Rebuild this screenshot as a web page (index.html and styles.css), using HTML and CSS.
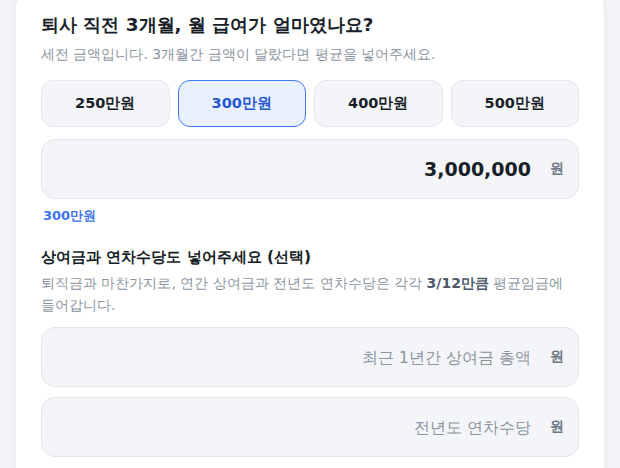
FILE: index.html
```html
<!DOCTYPE html>
<html lang="ko">
<head>
<meta charset="utf-8">
<title>평균임금 입력</title>
<link rel="stylesheet" href="styles.css">
</head>
<body>
<div class="page">
  <section class="card">
    <h2 class="title">퇴사 직전 3개월, 월 급여가 얼마였나요?</h2>
    <p class="subtitle">세전 금액입니다. 3개월간 금액이 달랐다면 평균을 넣어주세요.</p>
    <div class="chips">
      <button class="chip" type="button">250만원</button>
      <button class="chip chip-active" type="button">300만원</button>
      <button class="chip" type="button">400만원</button>
      <button class="chip" type="button">500만원</button>
    </div>
    <label class="field field-main">
      <input class="field-input field-value" type="text" value="3,000,000">
      <span class="field-unit">원</span>
    </label>
    <p class="helper">300만원</p>

    <h3 class="section-title">상여금과 연차수당도 넣어주세요 (선택)</h3>
    <p class="desc">퇴직금과 마찬가지로, 연간 상여금과 전년도 연차수당은 각각 <strong>3/12만큼</strong> 평균임금에 들어갑니다.</p>
    <label class="field field-opt">
      <input class="field-input" type="text" placeholder="최근 1년간 상여금 총액">
      <span class="field-unit">원</span>
    </label>
    <label class="field field-opt">
      <input class="field-input" type="text" placeholder="전년도 연차수당">
      <span class="field-unit">원</span>
    </label>
  </section>
</div>
</body>
</html>
```

FILE: styles.css
```css
* { box-sizing: border-box; }

html, body {
  margin: 0;
  padding: 0;
  height: 100%;
  overflow: hidden;
  background: #f2f4f7;
  font-family: "DejaVu Sans", sans-serif;
  color: #191f28;
}

.page {
  padding: 0 16px;
}

.card {
  margin-top: -12px;
  background: #ffffff;
  border-radius: 20px;
  padding: 24px 25px 40px;
  box-shadow: 0 1px 6px rgba(30, 40, 70, 0.07);
  min-height: 520px;
}

.title {
  margin: 0;
  font-size: 18.4px;
  line-height: 26px;
  font-weight: 700;
  color: #191f28;
}

.subtitle {
  margin: 6px 0 0;
  font-size: 14px;
  line-height: 20px;
  color: #8b95a1;
}

.chips {
  margin-top: 16px;
  display: grid;
  grid-template-columns: repeat(4, 1fr);
  gap: 8px;
}

.chip {
  height: 47px;
  border: 1px solid #e3e6eb;
  background: #f4f5f8;
  border-radius: 12px;
  font-family: inherit;
  font-size: 14.5px;
  font-weight: 700;
  color: #191f28;
  padding: 0;
}

.chip-active {
  background: #eaf1fe;
  border-color: #3e78f2;
  color: #2557d0;
}

.field {
  display: flex;
  align-items: center;
  gap: 19px;
  height: 60px;
  padding: 0 14px 0 16px;
  background: #f4f5f8;
  border: 1px solid #e3e6eb;
  border-radius: 14px;
}

.field-main {
  margin-top: 12px;
}

.field-opt {
  margin-top: 10px;
}

.desc + .field-opt {
  margin-top: 11px;
}

.field-input {
  flex: 1;
  min-width: 0;
  border: 0;
  outline: 0;
  background: transparent;
  text-align: right;
  padding: 0;
  font-family: "DejaVu Sans", sans-serif;
  font-size: 16px;
  color: #191f28;
}

.field-input::placeholder {
  color: #8b95a1;
  opacity: 1;
}

.field-value {
  font-size: 19px;
  font-weight: 700;
  color: #191f28;
}

.field-unit {
  font-size: 14px;
  font-weight: 700;
  color: #6b7684;
  width: 14px;
}

.helper {
  margin: 8px 0 0 2px;
  font-size: 13px;
  line-height: 18px;
  font-weight: 700;
  color: #3b74f0;
}

.section-title {
  margin: 21px 0 0;
  font-size: 15.4px;
  line-height: 22px;
  font-weight: 700;
  color: #191f28;
}

.desc {
  margin: 4px 0 0;
  font-size: 14px;
  line-height: 22px;
  color: #8b95a1;
}

.desc strong {
  color: #4e5968;
  font-weight: 700;
}
```
